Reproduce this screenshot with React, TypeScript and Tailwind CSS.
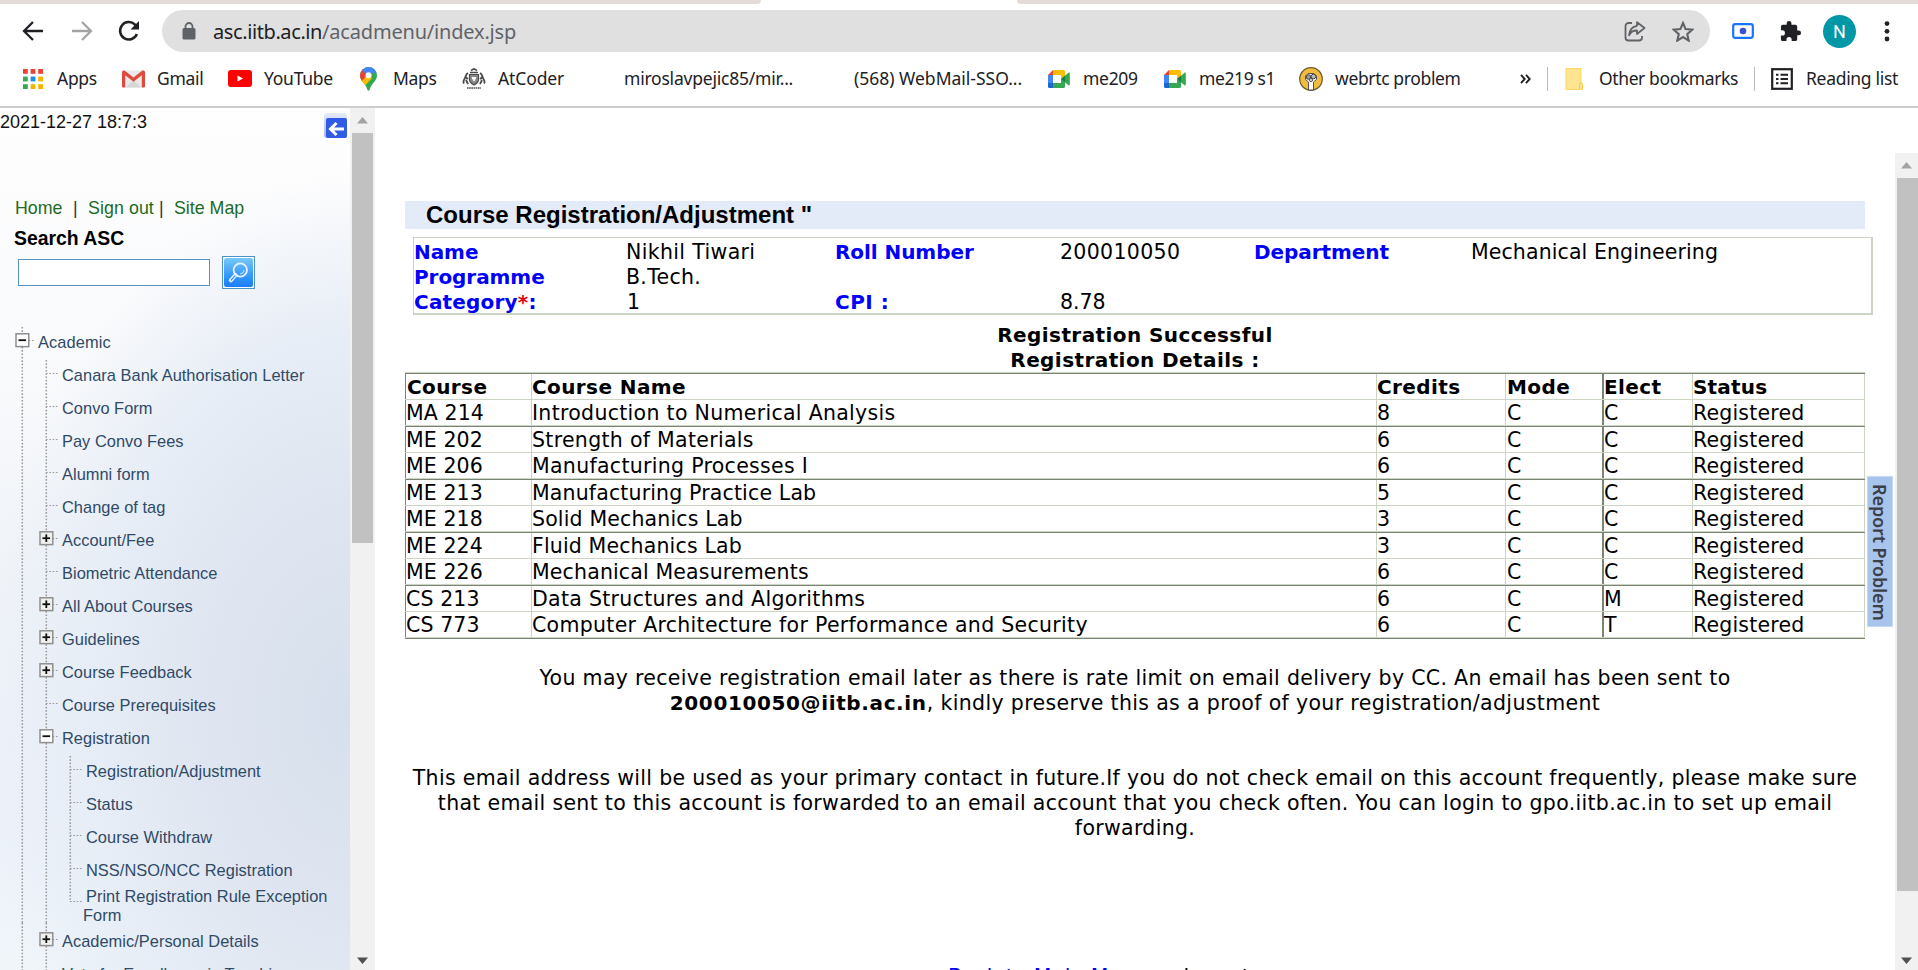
import type { ReactNode } from "react";

/* ---------- browser chrome ---------- */

function AppsIcon() {
  const colors = ["#ea4335", "#ea4335", "#ea4335", "#34a853", "#1a8cf0", "#f4b400", "#34a853", "#f4b400", "#f4b400"];
  return (
    <svg width="20" height="20" viewBox="0 0 20 20">
      {colors.map((c, i) => (
        <rect key={i} x={(i % 3) * 7.6} y={Math.floor(i / 3) * 7.6} width="4.8" height="4.8" fill={c} />
      ))}
    </svg>
  );
}

function GmailIcon() {
  return (
    <svg width="23" height="18" viewBox="0 0 23 18">
      <rect x="0.5" y="0.5" width="22" height="17" rx="1.5" fill="#e9e9e9" />
      <path d="M4 17.5 11.5 10 19 17.5Z" fill="#d6d6d6" />
      <path d="M0 2.5C0 .5 2 0 3.2 1L11.5 7.6 19.800 1C21 0 23 .5 23 2.500V16.500a1 1 0 0 1-1 1H19.800V5.200L11.500 11.800 3.200 5.200V17.500H1a1 1 0 0 1-1-1Z" fill="#dd4b3e" />
    </svg>
  );
}

function YouTubeIcon() {
  return (
    <svg width="24" height="17" viewBox="0 0 24 17">
      <rect width="24" height="17" rx="3" fill="#f00" />
      <path d="M9.500 5.500v6l5.500-3Z" fill="#fff" />
    </svg>
  );
}

function MapsIcon() {
  return (
    <svg width="17" height="24" viewBox="0 0 17 24">
      <defs>
        <clipPath id="pin">
          <path d="M8.500 0a8.500 8.500 0 0 1 8.500 8.500c0 5.500-5.500 7.500-7.400 14.300-.3 1.400-1.900 1.400-2.200 0C5.500 16 0 14 0 8.500A8.500 8.500 0 0 1 8.500 0Z" />
        </clipPath>
      </defs>
      <g clipPath="url(#pin)">
        <rect width="17" height="24" fill="#34a853" />
        <path d="M-1 16 8 6l4 5-9 10Z" fill="#fbbc04" />
        <path d="M-1 12V2L3 2l5 5-7 8Z" fill="#ea4335" />
        <path d="M2 3 8-1l9 1-5 7-5 1Z" fill="#4285f4" />
        <path d="M12 4 16 2l2 6Z" fill="#4285f4" />
      </g>
      <circle cx="8.500" cy="8.300" r="3" fill="#fff" />
    </svg>
  );
}

function AtCoderIcon() {
  return (
    <svg width="24" height="22" viewBox="0 0 24 22" fill="none" stroke="#4a4a4a">
      <path d="M9 2.500 12 .8l3 1.700M8 4.500h8" strokeWidth="1.600" />
      <path d="M7.500 6.500h9v5c0 3-2.500 4.500-4.500 5.500-2-1-4.500-2.500-4.500-5.500Z" fill="#8a8a8a" strokeWidth="1.200" />
      <path d="M10 9.500 12 13l2-3.500Z" fill="#fff" stroke="#fff" />
      <path d="M6 5C3.500 6 4 9 2.500 11c-1 1.500-1.500 3-.5 4.500M18 5c2.500 1 2 4 3.500 6 1 1.500 1.500 3 .5 4.500M4 12l2 4M20 12l-2 4M3.500 9 6 11M20.500 9 18 11" strokeWidth="1.800" />
      <path d="M5 20h14" strokeWidth="2.200" strokeDasharray="1.600 .6" stroke="#777" />
    </svg>
  );
}

function MeetIcon() {
  return (
    <svg width="22" height="18" viewBox="0 0 22 18">
      <path d="M5 0v5H0Z" fill="#ea4335" />
      <path d="M0 5h5v8H0Z" fill="#4285f4" />
      <path d="M0 13h5v5H1.500A1.500 1.500 0 0 1 0 16.500Z" fill="#1967d2" />
      <path d="M5 0h10.500A1.500 1.500 0 0 1 17 1.500V6l-4 3V5H5Z" fill="#fbbc04" />
      <path d="M5 13h8V9l4 3v4.500a1.500 1.500 0 0 1-1.500 1.500H5Z" fill="#34a853" />
      <path d="M13 9 20.500 2.800c.6-.5 1.300-.2 1.300.6v11.200c0 .8-.7 1.100-1.300.6Z" fill="#34a853" />
      <path d="M13 9 17 5.700v6.600Z" fill="#188038" />
    </svg>
  );
}

function ConfluxIcon() {
  return (
    <svg width="24" height="24" viewBox="0 0 24 24">
      <circle cx="12" cy="12" r="11.300" fill="#f2bd3c" stroke="#6b5a2c" strokeWidth="1.200" />
      <path d="M9.500 23V15L6.500 12.500V9L9 6.500h6L17.500 9v3.500L14.500 15v8Z" fill="#fff" stroke="#555" />
      <circle cx="9.500" cy="10" r="2.300" fill="#999" stroke="#444" />
      <circle cx="14.500" cy="9.500" r="2.300" fill="#bbb" stroke="#444" />
      <circle cx="12" cy="13" r="1.600" fill="#ddd" stroke="#555" />
    </svg>
  );
}

function FolderIcon() {
  return (
    <svg width="18" height="22" viewBox="0 0 18 22">
      <path d="M1 .5h15V15.500l1.500 1V21.500H1Z" fill="#ffe591" stroke="#fbd65c" />
      <path d="M14.500 21V16.500q0-1.500 1.500-1.500t1.500 1.500V21" fill="#ffe591" stroke="#f2c94c" />
    </svg>
  );
}

function ReadingListIcon() {
  return (
    <svg width="22" height="22" viewBox="0 0 22 22" fill="none" stroke="#202124">
      <rect x="1.200" y="1.200" width="19.600" height="19.600" strokeWidth="2.200" />
      <path d="M5 6.800h2.500M5 11h2.500M5 15.200h2.500M9.500 6.800h7.500M9.500 11h7.500M9.500 15.200h7.500" strokeWidth="2" />
    </svg>
  );
}

function Bookmark({ icon, slot, width, text, label }: { icon?: ReactNode; slot: string; width: string; text: string; label: string }) {
  return (
    <div className={`flex shrink-0 items-center ${width}`}>
      <div className={`flex shrink-0 items-center ${slot}`}>{icon}</div>
      <span className={`whitespace-nowrap ${text}`}>{label}</span>
    </div>
  );
}

function Toolbar() {
  return (
    <div className="flex h-[54px] items-start">
      <div className="flex h-[54px] w-[162px] shrink-0 items-center pl-[22px]">
        <svg width="22" height="20" viewBox="0 0 22 20" fill="none" stroke="#202124" strokeWidth="2.300">
          <path d="M21 10H2.500M11 1 2 10l9 9" />
        </svg>
        <svg className="ml-[27px]" width="22" height="20" viewBox="0 0 22 20" fill="none" stroke="#a3a4a6" strokeWidth="2.300">
          <path d="M1 10h18.500M11 1l9 9-9 9" />
        </svg>
        <svg className="ml-[25px]" width="22" height="22" viewBox="0 0 22 22" fill="none" stroke="#202124" strokeWidth="2.500">
          <path d="M18.900 14A8.700 8.700 0 1 1 17 4.600l2 2.200" />
          <path d="M21 1v8.500h-8.500Z" fill="#202124" stroke="none" />
        </svg>
      </div>
      <div className="mt-[6px] flex h-[42px] w-[1548px] shrink-0 items-center rounded-full bg-[#e0e0e0] pl-[20px]">
        <svg width="14" height="18" viewBox="0 0 14 18">
          <rect x="0.500" y="6" width="13" height="11.500" rx="1.500" fill="#5f6368" />
          <path d="M3.500 7V4.500a3.500 3.500 0 0 1 7 0V7" fill="none" stroke="#5f6368" strokeWidth="1.800" />
        </svg>
        <span className="ml-[17px] pt-[2px] text-[20px] whitespace-nowrap text-[#606368]">
          <span className="tracking-[-0.4px] text-[#202124]">asc.iitb.ac.in</span>
          <span className="tracking-[-0.19px]">/acadmenu/index.jsp</span>
        </span>
        <svg className="mr-[26px] ml-auto" width="22" height="21" viewBox="0 0 22 21" fill="none" stroke="#5f6368" strokeWidth="1.800" strokeLinejoin="round">
          <path d="M8 2H4.500A3 3 0 0 0 1.500 5v11.500a3 3 0 0 0 3 3H15a3 3 0 0 0 3-3V15" />
          <path d="M13 1.200 20.500 7 13 13V9.500c-4 0-6.500 1.500-8 4.800.5-5 3-8.800 8-9.500Z" />
        </svg>
        <svg className="mr-[16px]" width="22" height="21" viewBox="0 0 22 21" fill="none" stroke="#5f6368" strokeWidth="2.100">
          <path d="m11 2 2.600 6.100 6.600.6-5 4.400 1.500 6.500L11 16.100l-5.700 3.500 1.500-6.500-5-4.400 6.600-.6Z" />
        </svg>
      </div>
      <div className="flex h-[54px] flex-1 items-center pl-[22px]">
        <svg width="22" height="16" viewBox="0 0 22 16">
          <rect x="1.200" y="1.200" width="19.600" height="13.600" rx="2" fill="#fff" stroke="#1a73ff" strokeWidth="2.200" />
          <circle cx="11" cy="8" r="3.300" fill="#3c4fd0" />
        </svg>
        <svg className="ml-[25px]" width="23" height="23" viewBox="0 0 24 24" fill="#202124">
          <path d="M20.500 11H19V7a2 2 0 0 0-2-2h-4V3.500a2.500 2.500 0 0 0-5 0V5H4a2 2 0 0 0-2 2v3.800h1.500a2.700 2.700 0 0 1 0 5.400H2V20a2 2 0 0 0 2 2h3.800v-1.500a2.700 2.700 0 0 1 5.400 0V22H17a2 2 0 0 0 2-2v-4h1.500a2.500 2.500 0 0 0 0-5Z" />
        </svg>
        <div className="ml-[21px] flex size-[33px] items-center justify-center rounded-full bg-[#0097a7] pt-px font-[Roboto] text-[18px] text-white">N</div>
        <svg className="ml-[28px]" width="6" height="21" viewBox="0 0 6 21" fill="#202124">
          <circle cx="3" cy="2.600" r="2.400" />
          <circle cx="3" cy="10.300" r="2.400" />
          <circle cx="3" cy="18" r="2.400" />
        </svg>
      </div>
    </div>
  );
}

function BookmarksBar() {
  return (
    <div className="flex h-[48px] items-center pb-[7px] pl-[23px] text-[17.5px] text-[#202124]">
      <Bookmark icon={<AppsIcon />} slot="w-[34px]" width="w-[99px]" text="tracking-[-0.3px]" label="Apps" />
      <Bookmark icon={<GmailIcon />} slot="w-[35px]" width="w-[106px]" text="tracking-[-0.3px]" label="Gmail" />
      <Bookmark icon={<YouTubeIcon />} slot="w-[36px]" width="w-[132px]" text="tracking-[-0.26px]" label="YouTube" />
      <Bookmark icon={<MapsIcon />} slot="w-[33px]" width="w-[102px]" text="tracking-[-0.3px]" label="Maps" />
      <Bookmark icon={<AtCoderIcon />} slot="w-[36px]" width="w-[162px]" text="tracking-[-0.12px]" label="AtCoder" />
      <Bookmark slot="w-0" width="w-[230px]" text="tracking-[-0.22px]" label="miroslavpejic85/mir..." />
      <Bookmark slot="w-0" width="w-[194px]" text="tracking-[0px]" label="(568) WebMail-SSO..." />
      <Bookmark icon={<MeetIcon />} slot="w-[35px]" width="w-[116px]" text="tracking-[-0.3px]" label="me209" />
      <Bookmark icon={<MeetIcon />} slot="w-[35px]" width="w-[135px]" text="tracking-[-0.4px]" label="me219 s1" />
      <Bookmark icon={<ConfluxIcon />} slot="w-[36px]" width="w-[221px]" text="tracking-[-0.36px]" label="webrtc problem" />
      <svg width="11" height="10" viewBox="0 0 11 10" fill="none" stroke="#202124" strokeWidth="1.900">
        <path d="m1 .8 3.700 4.200L1 9.200M6 .8 9.700 5 6 9.200" />
      </svg>
      <div className="ml-[16px] h-[24px] w-px bg-[#b9bbbe]" />
      <div className="w-[17px]" />
      <Bookmark icon={<FolderIcon />} slot="w-[34px]" width="w-[189px]" text="tracking-[-0.39px]" label="Other bookmarks" />
      <div className="h-[24px] w-px bg-[#b9bbbe]" />
      <div className="w-[16px]" />
      <Bookmark icon={<ReadingListIcon />} slot="w-[35px]" width="w-[130px]" text="tracking-[-0.3px]" label="Reading list" />
    </div>
  );
}

function TabStrip() {
  return (
    <div className="flex h-[4px] bg-white">
      <div className="w-[761px] rounded-br-[6px] bg-[#e3dbd7]" />
      <div className="w-[256px]" />
      <div className="flex-1 rounded-bl-[6px] bg-[#e3dbd7]" />
    </div>
  );
}

/* ---------- scrollbar ---------- */

function Scrollbar({ width, thumb, inset }: { width: string; thumb: string; inset: string }) {
  return (
    <div className={`flex shrink-0 flex-col items-center bg-[#f1f1f1] ${width}`}>
      <div className="flex h-[25px] items-center">
        <svg width="11" height="7" viewBox="0 0 11 7"><path d="M0 6.500 5.500 0 11 6.500Z" fill="#a3a3a3" /></svg>
      </div>
      <div className={`bg-[#c1c1c1] ${thumb} ${inset}`} />
      <div className="mt-auto flex h-[20px] items-center">
        <svg width="11" height="7" viewBox="0 0 11 7"><path d="M0 .5 5.500 7 11 .5Z" fill="#505050" /></svg>
      </div>
    </div>
  );
}

/* ---------- menu tree ---------- */

type Mark = "line" | "item" | "plus" | "minus" | "last";

function Guide({ mark, top = 0, height = 33 }: { mark: Mark; top?: number; height?: number }) {
  const box = mark === "plus" || mark === "minus";
  return (
    <svg className="shrink-0" width="25" height={height} viewBox={`0 0 25 ${height}`} fill="none">
      <path d={`M12.300 ${top}V${mark === "last" ? 17 : height}`} stroke="#9a9a9a" strokeWidth="1.500" strokeDasharray="1.600 1.700" />
      {mark !== "line" && <path d="M12 16.500H25" stroke="#9a9a9a" strokeWidth="1.200" strokeDasharray="1.600 1.700" />}
      {box && (
        <>
          <rect x="6" y="9.800" width="12.800" height="12.800" fill={mark === "plus" ? "#f0f0f0" : "#fff"} stroke="#8e8e8e" strokeWidth="1.500" />
          <path d="M8.500 16.200h7.600" stroke="#111" strokeWidth="1.800" />
          {mark === "plus" && <path d="M12.300 12.400v7.600" stroke="#111" strokeWidth="1.800" />}
        </>
      )}
    </svg>
  );
}

type Node = { label: string; level: 1 | 2; mark: Mark; start?: boolean };

const upper: Node[] = [
  { label: "Canara Bank Authorisation Letter", level: 1, mark: "item", start: true },
  { label: "Convo Form", level: 1, mark: "item" },
  { label: "Pay Convo Fees", level: 1, mark: "item" },
  { label: "Alumni form", level: 1, mark: "item" },
  { label: "Change of tag", level: 1, mark: "item" },
  { label: "Account/Fee", level: 1, mark: "plus" },
  { label: "Biometric Attendance", level: 1, mark: "item" },
  { label: "All About Courses", level: 1, mark: "plus" },
  { label: "Guidelines", level: 1, mark: "plus" },
  { label: "Course Feedback", level: 1, mark: "plus" },
  { label: "Course Prerequisites", level: 1, mark: "item" },
  { label: "Registration", level: 1, mark: "minus" },
  { label: "Registration/Adjustment", level: 2, mark: "item", start: true },
  { label: "Status", level: 2, mark: "item" },
  { label: "Course Withdraw", level: 2, mark: "item" },
  { label: "NSS/NSO/NCC Registration", level: 2, mark: "item" },
];

const lower: Node[] = [
  { label: "Academic/Personal Details", level: 1, mark: "plus" },
  { label: "Vote for Excellence in Teaching", level: 1, mark: "item" },
];

function Gutter({ children }: { children: ReactNode }) {
  return <div className="-mr-px flex shrink-0">{children}</div>;
}

function TreeRow({ node }: { node: Node }) {
  return (
    <div className="flex h-[33px] shrink-0">
      <Gutter><Guide mark="line" /></Gutter>
      {node.level === 2 && <Gutter><Guide mark="line" /></Gutter>}
      <Gutter><Guide mark={node.mark} top={node.start ? 3 : 0} /></Gutter>
      <span className="pt-[2px] pl-[4px] leading-[33px] whitespace-nowrap">{node.label}</span>
    </div>
  );
}

function MenuTree() {
  return (
    <div className="flex flex-col pl-[10px] text-[16.4px] tracking-[0.03px] text-[#2f4a66]">
      <div className="flex h-[33px] shrink-0">
        <Gutter><Guide mark="minus" top={3} /></Gutter>
        <span className="pt-[2px] pl-[4px] leading-[33px] tracking-[0.1px]">Academic</span>
      </div>
      {upper.map((n) => <TreeRow key={n.label} node={n} />)}
      <div className="flex h-[38px] shrink-0">
        <Gutter><Guide mark="line" height={38} /></Gutter>
        <Gutter><Guide mark="line" height={38} /></Gutter>
        <Gutter><Guide mark="last" height={38} /></Gutter>
        <div className="pt-[2px] leading-[19px] whitespace-nowrap">
          <div className="pl-[4px]">Print Registration Rule Exception</div>
          <div className="pl-[1px]">Form</div>
        </div>
      </div>
      {lower.map((n) => <TreeRow key={n.label} node={n} />)}
    </div>
  );
}

function Sidebar() {
  return (
    <aside className="flex w-[350px] shrink-0 flex-col overflow-hidden bg-[radial-gradient(ellipse_105%_62%_at_100%_70%,#d6e0ec_0%,#dfe5f0_38%,#e7edf6_70%,rgba(240,244,250,0)_100%),linear-gradient(to_bottom,#fefefe_0%,#f9fafc_30%,#eff3f8_55%,#ecf1fa_80%,#eff5f9_100%)] font-['Liberation_Sans',Arial,sans-serif]">
      <div className="flex h-[84px] shrink-0 justify-between">
        <span className="pt-[3px] text-[18px] leading-[22px] text-[#111]">2021-12-27 18:7:3</span>
        <div className="mt-[5px] mr-[3px] flex h-[25px] w-[23px] items-end justify-end rounded-[3px] bg-[linear-gradient(to_bottom,#e6ecf8,#9fb5e6)]">
          <svg width="21" height="20" viewBox="0 0 21 20" fill="none">
            <rect width="21" height="20" rx="2" fill="#2f5be6" />
            <path d="M18 11H5M10.500 5 4.500 11l6 6" stroke="#fff" strokeWidth="3" />
          </svg>
        </div>
      </div>
      <div className="flex h-[30px] shrink-0 pl-[15px] text-[17.8px] leading-[32px] whitespace-pre text-[#1c6b24]">
        <span className="w-[58px]">Home</span>
        <span className="w-[15px] text-[#333]">|</span>
        <span className="w-[71px] tracking-[0.08px]">Sign out</span>
        <span className="w-[15px] text-[#333]">|</span>
        <span>Site Map</span>
      </div>
      <div className="h-[31px] shrink-0 pl-[14px] text-[19.4px] leading-[32px] font-bold text-black">Search ASC</div>
      <div className="flex h-[71px] shrink-0 pt-[3px] pl-[18px]">
        <input className="mt-[3px] h-[27px] w-[192px] border border-[#5592bd] bg-white" />
        <button className="ml-[12px] flex size-[33px] items-center justify-center border border-[#4b93c4] bg-white">
          <svg width="29" height="29" viewBox="0 0 29 29" fill="none">
            <defs>
              <linearGradient id="search" x1="0" y1="0" x2="0" y2="1">
                <stop offset="0" stopColor="#79c8f8" />
                <stop offset="0.550" stopColor="#3a9cfb" />
                <stop offset="1" stopColor="#1a7df6" />
              </linearGradient>
            </defs>
            <rect width="29" height="29" rx="2.500" fill="url(#search)" />
            <circle cx="16.300" cy="12" r="6.700" stroke="#e6f3ff" strokeWidth="1.800" />
            <path d="M20 12a3.800 3.800 0 0 1-3.800 3.800" stroke="#b9dcff" strokeWidth="1.200" />
            <path d="m11.500 17-4.700 5.300" stroke="#e6f3ff" strokeWidth="4" strokeLinecap="round" />
            <path d="m11 17.800-3.800 4.200" stroke="#3a96f8" strokeWidth="1.200" strokeLinecap="round" />
          </svg>
        </button>
      </div>
      <MenuTree />
    </aside>
  );
}

/* ---------- registration page ---------- */

const wide = "tracking-[0.3px]";
const tight = "tracking-[0.15px]";

const courses: { cells: string[]; name: string }[] = [
  { cells: ["MA 214", "Introduction to Numerical Analysis", "8", "C", "C"], name: wide },
  { cells: ["ME 202", "Strength of Materials", "6", "C", "C"], name: wide },
  { cells: ["ME 206", "Manufacturing Processes I", "6", "C", "C"], name: wide },
  { cells: ["ME 213", "Manufacturing Practice Lab", "5", "C", "C"], name: tight },
  { cells: ["ME 218", "Solid Mechanics Lab", "3", "C", "C"], name: tight },
  { cells: ["ME 224", "Fluid Mechanics Lab", "3", "C", "C"], name: tight },
  { cells: ["ME 226", "Mechanical Measurements", "6", "C", "C"], name: tight },
  { cells: ["CS 213", "Data Structures and Algorithms", "6", "C", "M"], name: wide },
  { cells: ["CS 773", "Computer Architecture for Performance and Security", "6", "C", "T"], name: wide },
];

function CourseRow({ cells, name, double, head }: { cells: string[]; name: string; double: boolean; head?: boolean }) {
  return (
    <div className={head ? "text-[20px] font-bold tracking-[0.4px]" : "tracking-[0.3px]"}>
      <div className="h-px bg-[#ccd4c4]" />
      {double && <div className="h-px bg-[#7b8374]" />}
      <div className={head ? "flex h-[25px] leading-[26px] whitespace-nowrap" : "flex h-[25px] leading-[27px] whitespace-nowrap"}>
        <div className={`w-[126px] border-l border-[#7b8374] ${head ? "pl-px" : "tracking-[0.1px]"}`}>{cells[0]}</div>
        <div className={`w-[845px] border-l border-[#ccd4c4] ${name}`}>{cells[1]}</div>
        <div className="w-[129px] border-l border-[#ccd4c4]">{cells[2]}</div>
        <div className="w-[97px] border-l border-[#ccd4c4] pl-px">{cells[3]}</div>
        <div className="w-[90px] border-l-2 border-[#7b8374]">{cells[4]}</div>
        <div className="flex-1 border-x border-[#ccd4c4] tracking-[0.18px]">{cells[5]}</div>
      </div>
    </div>
  );
}

function Details() {
  const label = "text-[20px] font-bold tracking-[-0.06px] text-[#0000fa]";
  return (
    <div className="mt-[8px] ml-[8px] grid h-[78px] w-[1460px] grid-cols-[213px_208px_225px_194px_217px_1fr] grid-rows-[25px_25px_25px] border-t border-r-2 border-b-2 border-l border-[#ccd4c4] leading-[29px] whitespace-nowrap">
      <span className={label}>Name</span>
      <span className="-ml-px tracking-[0.35px]">Nikhil Tiwari</span>
      <span className={label}>Roll Number</span>
      <span className="tracking-[0.32px]">200010050</span>
      <span className={label}>Department</span>
      <span className="tracking-[0.1px]">Mechanical Engineering</span>
      <span className={label}>Programme</span>
      <span className="col-span-5 -ml-px tracking-[0.3px]">B.Tech.</span>
      <span className="text-[20px] font-bold tracking-[0.2px] text-[#0000fa]">Category<span className="text-red-600">*</span>:</span>
      <span>1</span>
      <span className="text-[20px] font-bold tracking-[0.5px] text-[#0000fa]">CPI :</span>
      <span>8.78</span>
    </div>
  );
}

function RegistrationPage() {
  return (
    <main className="h-[862px] w-[1520px] shrink-0 overflow-hidden bg-white pt-[93px] pl-[30px] font-['DejaVu_Sans',Verdana,sans-serif] text-[20.5px] text-black">
      <div className="h-[28px] w-[1460px] bg-[#e4ebf8] pl-[21px] font-['Liberation_Sans',Arial,sans-serif] text-[24px] leading-[28px] font-bold">
        Course Registration/Adjustment "
      </div>
      <Details />
      <div className="h-[57px] w-[1460px] pt-[8px] text-center text-[20px] leading-[25px] font-bold tracking-[0.42px]">
        <div>Registration Successful</div>
        <div>Registration Details :</div>
      </div>
      <div className="w-[1460px]">
        <CourseRow head double name="" cells={["Course", "Course Name", "Credits", "Mode", "Elect", "Status"]} />
        {courses.map((c, i) => (
          <CourseRow key={c.cells[0]} double={i % 2 === 1} name={c.name} cells={[...c.cells, "Registered"]} />
        ))}
        <div className="h-px bg-[#ccd4c4]" />
        <div className="h-px bg-[#7b8374]" />
      </div>
      <div className="mt-[27px] w-[1460px] text-center leading-[25px] tracking-[0.315px] whitespace-nowrap">
        <div>You may receive registration email later as there is rate limit on email delivery by CC. An email has been sent to</div>
        <div className="tracking-[0.35px]"><b className="text-[20px] tracking-[0.62px]">200010050@iitb.ac.in</b>, kindly preserve this as a proof of your registration/adjustment</div>
      </div>
      <div className="mt-[50px] w-[1460px] text-center leading-[25px] tracking-[0.315px] whitespace-nowrap">
        <div>This email address will be used as your primary contact in future.If you do not check email on this account frequently, please make sure</div>
        <div>that email sent to this account is forwarded to an email account that you check often. You can login to gpo.iitb.ac.in to set up email</div>
        <div>forwarding.</div>
      </div>
      <div className="mt-[124px] h-[25px] pl-[543px] leading-[25px] tracking-[0.3px] whitespace-nowrap">
        <span className="text-[#0000ee]">Back to Main Menu</span> or logout
      </div>
    </main>
  );
}

export default function App() {
  return (
    <div className="relative flex h-[970px] w-[1918px] flex-col overflow-hidden bg-white font-['Noto_Sans','Open_Sans',sans-serif]">
      <TabStrip />
      <Toolbar />
      <BookmarksBar />
      <div className="h-[2px] shrink-0 bg-[#cdcdcd]" />
      <div className="flex h-[862px]">
        <Sidebar />
        <Scrollbar width="w-[25px]" thumb="h-[410px]" inset="w-[21px]" />
        <RegistrationPage />
        <div className="flex w-[23px] flex-col pt-[45px]">
          <div className="flex h-[817px]">
            <Scrollbar width="w-[23px]" thumb="h-[713px]" inset="w-[21px] ml-[2px]" />
          </div>
        </div>
      </div>
      <div className="absolute top-[476px] left-[1867px] flex h-[151px] w-[26px] items-center justify-center border border-[#c4d8f4] bg-[#a9c4ec] pt-[2px] text-[18px] leading-none font-semibold tracking-[-0.1px] whitespace-nowrap text-[#3a3f48] [writing-mode:vertical-rl]">
        Report Problem
      </div>
    </div>
  );
}
